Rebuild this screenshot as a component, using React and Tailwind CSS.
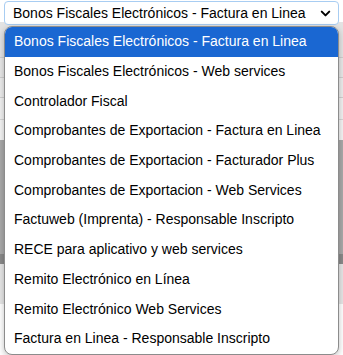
import React from 'react';
import { ChevronDown } from 'lucide-react';

const options = [
  'Bonos Fiscales Electrónicos - Factura en Linea',
  'Bonos Fiscales Electrónicos - Web services',
  'Controlador Fiscal',
  'Comprobantes de Exportacion - Factura en Linea',
  'Comprobantes de Exportacion - Facturador Plus',
  'Comprobantes de Exportacion - Web Services',
  'Factuweb (Imprenta) - Responsable Inscripto',
  'RECE para aplicativo y web services',
  'Remito Electrónico en Línea',
  'Remito Electrónico Web Services',
  'Factura en Linea - Responsable Inscripto',
];

const App = () => {
  return (
    <div className="w-[343px] h-[355px] bg-white relative overflow-hidden font-['Liberation_Sans',Arial,sans-serif]">
      {/* page behind the open list */}
      <div className="flex flex-col pt-[22px]">
        <div className="h-[36px] bg-[#e3e3e3] border-b border-[#cfcfcf]" />
        <div className="h-[20px] bg-[#e8e8e8] border-b border-[#cfcfcf]" />
        <div className="h-[20px] bg-[#ececec] border-b border-[#d0d0d0]" />
        <div className="h-[22px] bg-[#f1f1f1] border-b border-[#d6d6d6]" />
        <div className="h-[20px] bg-[#f4f4f4]" />
        <div className="h-[114px] bg-[#a9a9a9]" />
        <div className="h-[10px] bg-[#8a8a8a]" />
        <div className="h-[40px] bg-[#e6e6e6]" />
      </div>

      <div className="absolute left-0 top-0 w-full px-[4px] pt-[1px]">
        <div className="h-[24px] bg-white border border-[#a8cdf2] rounded-[4px] flex items-center justify-between pl-[8px] pr-[5px] text-[14px] text-black whitespace-nowrap">
          <span>Bonos Fiscales Electrónicos - Factura en Linea</span>
          <ChevronDown size={15} strokeWidth={3.2} className="text-black shrink-0" />
        </div>
      </div>

      <div className="absolute left-[4px] top-[26px] w-[335px] bg-white border border-[#8c8c8c] rounded-[8px] shadow-[0_2px_6px_rgba(0,0,0,0.25)] overflow-hidden">
        {options.map((o, i) => (
          <div
            key={o}
            className={
              i === 0
                ? 'h-[29.7px] flex items-center pl-[9px] text-[14px] whitespace-nowrap bg-[#1a67d2] text-white'
                : 'h-[29.7px] flex items-center pl-[9px] text-[14px] whitespace-nowrap text-black'
            }
          >
            {o}
          </div>
        ))}
      </div>
    </div>
  );
};

export default App;
